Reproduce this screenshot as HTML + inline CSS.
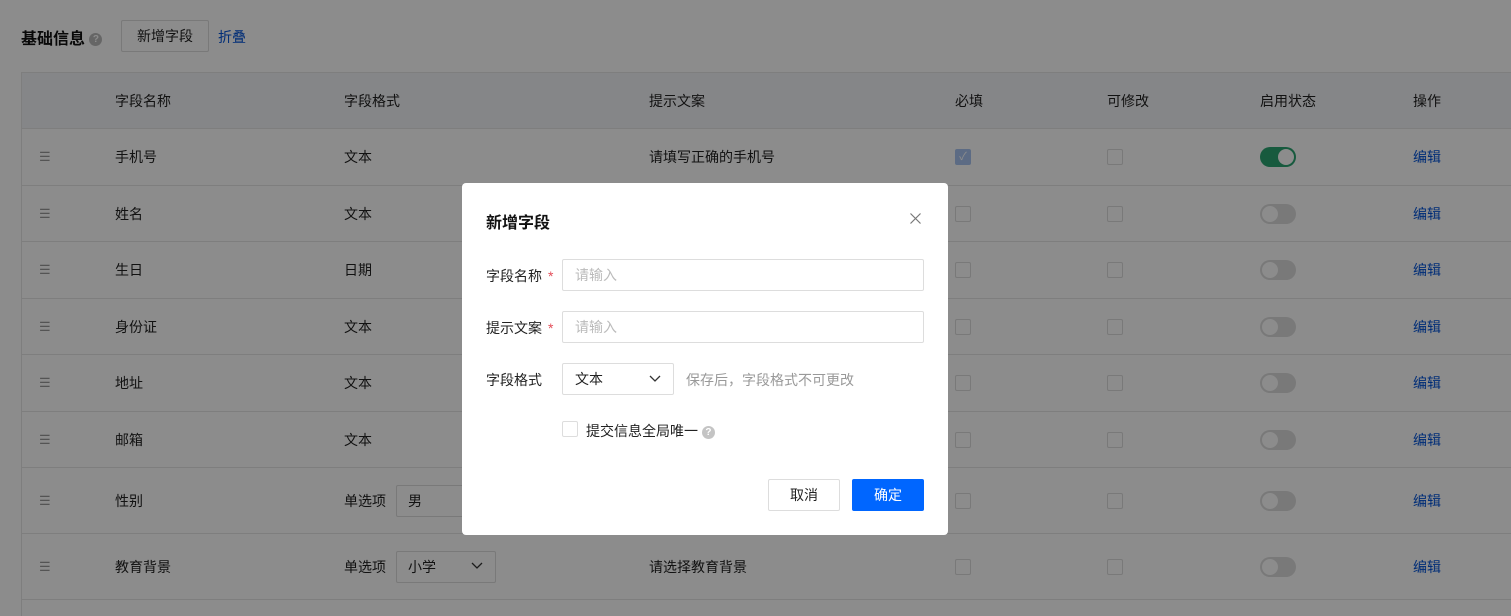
<!DOCTYPE html>
<html style="width:1511px;height:616px;overflow:hidden"><head><meta charset="utf-8"><style>
*{box-sizing:border-box;margin:0;padding:0}
body{width:1511px;height:616px;overflow:hidden;background:#fff;font-family:"Liberation Sans","Noto Sans CJK SC",sans-serif;font-size:14px;color:#222;position:relative}
.abs{position:absolute}
.title{left:21px;top:25px;font-size:16px;font-weight:bold;color:#111}
.q{display:inline-block;width:13px;height:13px;border-radius:50%;background:#bbb;color:#fff;font-size:10px;text-align:center;line-height:13px;font-weight:bold}
.btn{left:121px;top:20px;width:88px;height:32px;border:1px solid #ddd;border-radius:2px;text-align:center;line-height:30px;color:#222}
.table{left:21px;top:72px;width:1490px;height:544px;border-left:1px solid #e6e6e6;border-top:1px solid #e6e6e6}
.row{position:absolute;left:22px;width:1489px;border-bottom:1px solid #e6e6e6}
.hdr{background:#f3f4f7}
.c{position:absolute;top:50%;transform:translateY(-50%);white-space:nowrap}
.cb{width:16px;height:16px;border:1px solid #ddd;border-radius:2px;background:#fff}
.sw{width:36px;height:20px;border-radius:10px;background:#dcdcdc}
.sw::after{content:"";position:absolute;left:2px;top:2px;width:16px;height:16px;border-radius:50%;background:#fff}
.sw.on{background:#2ba471}.sw.on::after{left:18px}
.link{color:#0052d9}
.drag{color:#999;font-size:13px}
.sel{border:1px solid #ddd;border-radius:2px;height:32px;background:#fff}
.ov{left:0;top:0;width:1511px;height:616px;background:rgba(0,0,0,.45)}
.modal{left:462px;top:183px;width:486px;height:352px;background:#fff;border-radius:4px}
.inp{position:absolute;border:1px solid #ddd;border-radius:2px;height:32px;color:#bbb;padding-left:12px;line-height:30px}
.lab{position:absolute;left:24px;color:#222}
.star{color:#e34d59;margin-left:6px}
</style></head><body>
<div class="abs title">基础信息 <span class="q" style="vertical-align:2px">?</span></div>
<div class="abs btn">新增字段</div>
<div class="abs link" style="left:218px;top:27px">折叠</div>
<div class="abs table"></div>

<div class="row hdr" style="top:73px;height:56px">
<span class="c" style="left:93px">字段名称</span><span class="c" style="left:322px">字段格式</span><span class="c" style="left:627px">提示文案</span><span class="c" style="left:933px">必填</span><span class="c" style="left:1085px">可修改</span><span class="c" style="left:1238px">启用状态</span><span class="c" style="left:1391px">操作</span></div>

<div class="row" style="top:129px;height:57px"><span class="c drag" style="left:17px">☰</span><span class="c" style="left:93px">手机号</span><span class="c" style="left:322px">文本</span><span class="c" style="left:627px">请填写正确的手机号</span><span class="c cb" style="left:933px;background:#a8c4f0;border-color:#a8c4f0;color:#fff;font-size:11px;text-align:center;line-height:14px">✓</span><span class="c cb" style="left:1085px"></span><span class="c sw on" style="left:1238px"></span><span class="c link" style="left:1391px">编辑</span></div>
<div class="row" style="top:186px;height:56px"><span class="c drag" style="left:17px">☰</span><span class="c" style="left:93px">姓名</span><span class="c" style="left:322px">文本</span><span class="c cb" style="left:933px"></span><span class="c cb" style="left:1085px"></span><span class="c sw" style="left:1238px"></span><span class="c link" style="left:1391px">编辑</span></div>
<div class="row" style="top:242px;height:57px"><span class="c drag" style="left:17px">☰</span><span class="c" style="left:93px">生日</span><span class="c" style="left:322px">日期</span><span class="c cb" style="left:933px"></span><span class="c cb" style="left:1085px"></span><span class="c sw" style="left:1238px"></span><span class="c link" style="left:1391px">编辑</span></div>
<div class="row" style="top:299px;height:56px"><span class="c drag" style="left:17px">☰</span><span class="c" style="left:93px">身份证</span><span class="c" style="left:322px">文本</span><span class="c cb" style="left:933px"></span><span class="c cb" style="left:1085px"></span><span class="c sw" style="left:1238px"></span><span class="c link" style="left:1391px">编辑</span></div>
<div class="row" style="top:355px;height:57px"><span class="c drag" style="left:17px">☰</span><span class="c" style="left:93px">地址</span><span class="c" style="left:322px">文本</span><span class="c cb" style="left:933px"></span><span class="c cb" style="left:1085px"></span><span class="c sw" style="left:1238px"></span><span class="c link" style="left:1391px">编辑</span></div>
<div class="row" style="top:412px;height:56px"><span class="c drag" style="left:17px">☰</span><span class="c" style="left:93px">邮箱</span><span class="c" style="left:322px">文本</span><span class="c cb" style="left:933px"></span><span class="c cb" style="left:1085px"></span><span class="c sw" style="left:1238px"></span><span class="c link" style="left:1391px">编辑</span></div>
<div class="row" style="top:468px;height:66px"><span class="c drag" style="left:17px">☰</span><span class="c" style="left:93px">性别</span><span class="c" style="left:322px">单选项</span><span class="c sel" style="left:374px;width:100px;padding-left:11px;line-height:30px">男</span><span class="c cb" style="left:933px"></span><span class="c cb" style="left:1085px"></span><span class="c sw" style="left:1238px"></span><span class="c link" style="left:1391px">编辑</span></div>
<div class="row" style="top:534px;height:66px"><span class="c drag" style="left:17px">☰</span><span class="c" style="left:93px">教育背景</span><span class="c" style="left:322px">单选项</span><span class="c sel" style="left:374px;width:100px;padding-left:11px;line-height:30px">小学<svg style="position:absolute;right:12px;top:10px" width="12" height="8" viewBox="0 0 12 8"><path d="M1 1l5 5 5-5" fill="none" stroke="#333" stroke-width="1.3"/></svg></span><span class="c" style="left:627px">请选择教育背景</span><span class="c cb" style="left:933px"></span><span class="c cb" style="left:1085px"></span><span class="c sw" style="left:1238px"></span><span class="c link" style="left:1391px">编辑</span></div>

<div class="abs ov"></div>
<div class="abs modal">
 <div class="abs" style="left:24px;top:26px;font-size:16px;font-weight:bold;color:#111">新增字段</div>
 <svg class="abs" style="left:448px;top:30px" width="11" height="11" viewBox="0 0 11 11"><path d="M0.5 0.5l10 10M10.5 0.5l-10 10" stroke="#777" stroke-width="1.2"/></svg>
 <div class="lab" style="top:83px">字段名称<span class="star">*</span></div>
 <div class="inp" style="left:100px;top:76px;width:362px">请输入</div>
 <div class="lab" style="top:135px">提示文案<span class="star">*</span></div>
 <div class="inp" style="left:100px;top:128px;width:362px">请输入</div>
 <div class="lab" style="top:187px">字段格式</div>
 <div class="inp" style="left:100px;top:180px;width:112px;color:#222">文本<svg style="position:absolute;right:12px;top:11px" width="12" height="8" viewBox="0 0 12 8"><path d="M1 1l5 5 5-5" fill="none" stroke="#333" stroke-width="1.3"/></svg></div>
 <div class="abs" style="left:224px;top:187px;color:#999">保存后，字段格式不可更改</div>
 <div class="abs cb" style="left:100px;top:238px"></div>
 <div class="abs" style="left:124px;top:238px;color:#222">提交信息全局唯一 <span class="q" style="background:#c4c4c4;vertical-align:1px">?</span></div>
 <div class="abs" style="left:306px;top:296px;width:72px;height:32px;border:1px solid #ddd;border-radius:2px;text-align:center;line-height:30px">取消</div>
 <div class="abs" style="left:390px;top:296px;width:72px;height:32px;background:#0066ff;border-radius:2px;text-align:center;line-height:32px;color:#fff">确定</div>
</div>
</body></html>
